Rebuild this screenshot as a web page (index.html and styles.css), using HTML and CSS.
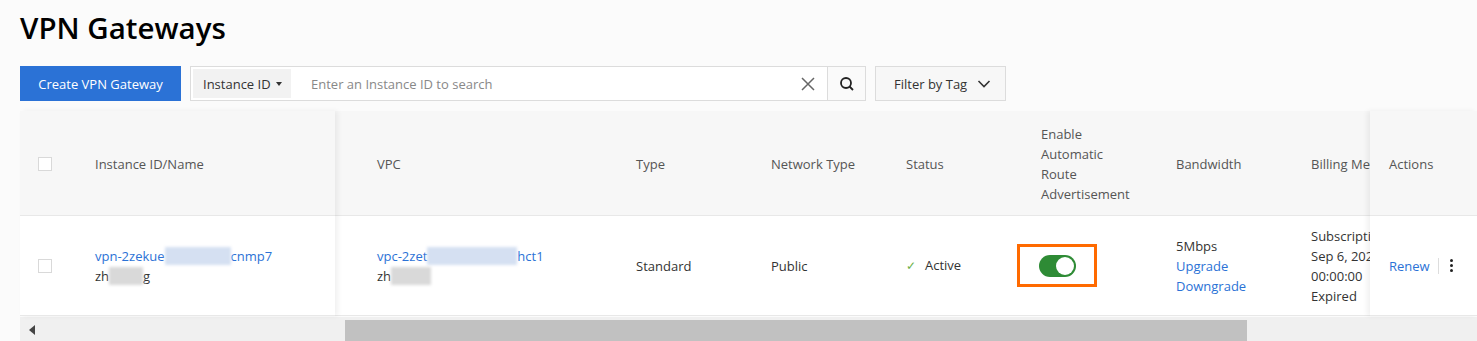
FILE: index.html
```html
<!DOCTYPE html>
<html lang="en">
<head>
    <meta charset="UTF-8">
    <title>VPN Gateways</title>
    <link rel="stylesheet" href="styles.css">
</head>
<body>
    <h1 class="page-title">VPN Gateways</h1>

    <div class="toolbar">
        <button class="btn-primary">Create VPN Gateway</button>
        <div class="search-box">
            <div class="search-select">Instance ID <span class="caret"></span></div>
            <div class="search-input">Enter an Instance ID to search</div>
            <span class="search-clear">
                <svg width="14" height="14" viewBox="0 0 14 14"><path d="M1 1L13 13M13 1L1 13" stroke="#666" stroke-width="1.5" fill="none"/></svg>
            </span>
            <span class="search-btn">
                <svg width="16" height="16" viewBox="0 0 16 16"><circle cx="7" cy="7" r="5" stroke="#222" stroke-width="1.8" fill="none"/><path d="M10.5 10.5L14 14" stroke="#222" stroke-width="1.8"/></svg>
            </span>
        </div>
        <button class="btn-filter">Filter by Tag
            <svg width="14" height="10" viewBox="0 0 14 10"><path d="M1.5 2L7 7.5L12.5 2" stroke="#333" stroke-width="1.6" fill="none"/></svg>
        </button>
    </div>

    <div class="grid">
        <!-- left fixed column -->
        <div class="pane pane-left">
            <div class="row head">
                <div class="cell cell-check"><span class="checkbox"></span></div>
                <div class="cell cell-id">Instance ID/Name</div>
            </div>
            <div class="row body">
                <div class="cell cell-check"><span class="checkbox"></span></div>
                <div class="cell cell-id">
                    <div><a class="link">vpn-2zekue<span class="blur blur-blue w66"></span>cnmp7</a></div>
                    <div>zh<span class="blur blur-gray w34"></span>g</div>
                </div>
            </div>
        </div>

        <!-- scrollable middle -->
        <div class="pane pane-mid">
            <div class="row head">
                <div class="cell c-vpc">VPC</div>
                <div class="cell c-std">Type</div>
                <div class="cell c-std">Network Type</div>
                <div class="cell c-std">Status</div>
                <div class="cell c-std">Enable<br>Automatic<br>Route<br>Advertisement</div>
                <div class="cell c-std">Bandwidth</div>
                <div class="cell c-std">Billing Method</div>
            </div>
            <div class="row body">
                <div class="cell c-vpc">
                    <div><a class="link">vpc-2zet<span class="blur blur-blue w90"></span>hct1</a></div>
                    <div>zh<span class="blur blur-gray w40"></span></div>
                </div>
                <div class="cell c-std">Standard</div>
                <div class="cell c-std">Public</div>
                <div class="cell c-std"><span class="tick">✓</span>Active</div>
                <div class="cell c-std">
                    <span class="highlight"><span class="switch"><span class="knob"></span></span></span>
                </div>
                <div class="cell c-std">
                    <div>5Mbps</div>
                    <div><a class="link">Upgrade</a></div>
                    <div><a class="link">Downgrade</a></div>
                </div>
                <div class="cell c-std nowrap">
                    <div>Subscription</div>
                    <div>Sep 6, 2023</div>
                    <div>00:00:00</div>
                    <div>Expired</div>
                </div>
            </div>
        </div>

        <!-- right fixed column -->
        <div class="pane pane-right">
            <div class="row head">
                <div class="cell cell-act">Actions</div>
            </div>
            <div class="row body">
                <div class="cell cell-act">
                    <a class="link">Renew</a>
                    <span class="divider"></span>
                    <span class="more"><i></i><i></i><i></i></span>
                </div>
            </div>
        </div>
    </div>

    <div class="scrollbar">
        <span class="arrow"></span>
        <span class="thumb"></span>
    </div>
</body>
</html>
```

FILE: styles.css
```css
body {
    margin: 0;
    padding: 0 0 0 20px;
    font-family: 'Open Sans', 'Noto Sans', sans-serif;
    font-size: 13px;
    color: #333;
    background-color: #fbfbfb;
    overflow: hidden;
}
.page-title {
    margin: 0;
    padding-top: 8px;
    height: 66px;
    box-sizing: border-box;
    font-size: 29.5px;
    font-weight: 600;
    line-height: 40px;
    color: #000;
}
.toolbar {
    display: flex;
    align-items: center;
    gap: 9px;
    height: 35px;
}
.btn-primary {
    height: 35px;
    width: 161px;
    border: none;
    background-color: #2b72d6;
    color: #fff;
    font-family: inherit;
    font-size: 13px;
    padding: 0;
}
.search-box {
    display: flex;
    align-items: center;
    width: 676px;
    height: 35px;
    box-sizing: border-box;
    border: 1px solid #dcdcdc;
    background: #fff;
    padding-left: 2px;
}
.search-select {
    display: flex;
    align-items: center;
    height: 29px;
    width: 98px;
    box-sizing: border-box;
    padding-left: 10px;
    background: #f2f2f2;
    color: #333;
}
.caret {
    display: inline-block;
    margin-left: 5px;
    border-left: 3.5px solid transparent;
    border-right: 3.5px solid transparent;
    border-top: 4px solid #333;
}
.search-input {
    flex: 1;
    padding-left: 20px;
    color: #888;
}
.search-clear {
    display: flex;
    width: 38px;
    justify-content: center;
}
.search-btn {
    display: flex;
    align-items: center;
    justify-content: center;
    width: 37px;
    height: 33px;
    border-left: 1px solid #dcdcdc;
    background: #fafafa;
}
.btn-filter {
    display: flex;
    align-items: center;
    gap: 10px;
    height: 35px;
    width: 131px;
    box-sizing: border-box;
    padding: 0 0 0 18px;
    border: 1px solid #dcdcdc;
    background: #f7f7f7;
    color: #333;
    font-family: inherit;
    font-size: 13px;
}
.grid {
    display: flex;
    margin-top: 10px;
}
.pane {
    flex: none;
    position: relative;
}
.pane-left {
    width: 315px;
    z-index: 2;
    box-shadow: 3px 0 5px rgba(0, 0, 0, 0.06);
}
.pane-mid {
    flex: 1;
    overflow: hidden;
    padding-left: 22px;
    z-index: 1;
}
.pane-right {
    width: 107px;
    z-index: 2;
    box-shadow: -3px 0 5px rgba(0, 0, 0, 0.06);
}
.row {
    display: flex;
    align-items: center;
    border-bottom: 1px solid #e8e8e8;
    box-sizing: border-box;
}
.row.head {
    height: 105px;
    padding-top: 1px;
    background: #f7f7f7;
}
.row.body {
    height: 100px;
    background: #fff;
}
.pane-mid .row {
    margin-left: -22px;
    padding-left: 22px;
    width: max-content;
    min-width: 100%;
}
.cell {
    flex: none;
    box-sizing: border-box;
    line-height: 20px;
    padding: 0 20px;
}
.cell-check {
    width: 55px;
    padding-left: 18px;
}
.cell-id {
    width: 260px;
}
.c-vpc {
    width: 259px;
}
.c-std {
    width: 135px;
}
.cell-act {
    display: flex;
    align-items: center;
    padding-left: 19px;
}
.nowrap {
    white-space: nowrap;
}
.checkbox {
    display: block;
    width: 12px;
    height: 12px;
    border: 1px solid #d9d9d9;
    background: #fff;
}
.head .cell {
    color: #555;
}
.link {
    color: #2b72d6;
}
.blur {
    display: inline-block;
    height: 18px;
    vertical-align: -4px;
    filter: blur(1.5px);
}
.blur-blue {
    background: #d5e0f2;
}
.blur-gray {
    background: #d9d9d9;
}
.w66 { width: 66px; }
.w34 { width: 34px; }
.w90 { width: 90px; }
.w40 { width: 40px; }
.tick {
    color: #6cb24a;
    font-size: 12px;
    margin-right: 9px;
}
.highlight {
    display: inline-flex;
    align-items: center;
    justify-content: center;
    width: 80px;
    height: 43px;
    box-sizing: border-box;
    border: 3px solid #ff6a00;
    margin-left: -24px;
}
.switch {
    display: flex;
    justify-content: flex-end;
    align-items: center;
    width: 37px;
    height: 22px;
    box-sizing: border-box;
    padding: 2px;
    border-radius: 11px;
    background: #2e8b35;
}
.knob {
    width: 18px;
    height: 18px;
    border-radius: 50%;
    background: #fff;
}
.divider {
    width: 1px;
    height: 16px;
    background: #ddd;
    margin: 0 11px 0 8px;
}
.more {
    display: flex;
    flex-direction: column;
    gap: 2px;
}
.more i {
    width: 3px;
    height: 3px;
    border-radius: 50%;
    background: #222;
}
.scrollbar {
    display: flex;
    align-items: center;
    height: 26px;
    margin-top: 1px;
    background: #f0f0f0;
}
.arrow {
    margin-left: 9px;
    border-top: 5px solid transparent;
    border-bottom: 5px solid transparent;
    border-right: 6px solid #444;
}
.thumb {
    margin-left: 310px;
    width: 902px;
    height: 21px;
    background: #c1c1c1;
}
```
